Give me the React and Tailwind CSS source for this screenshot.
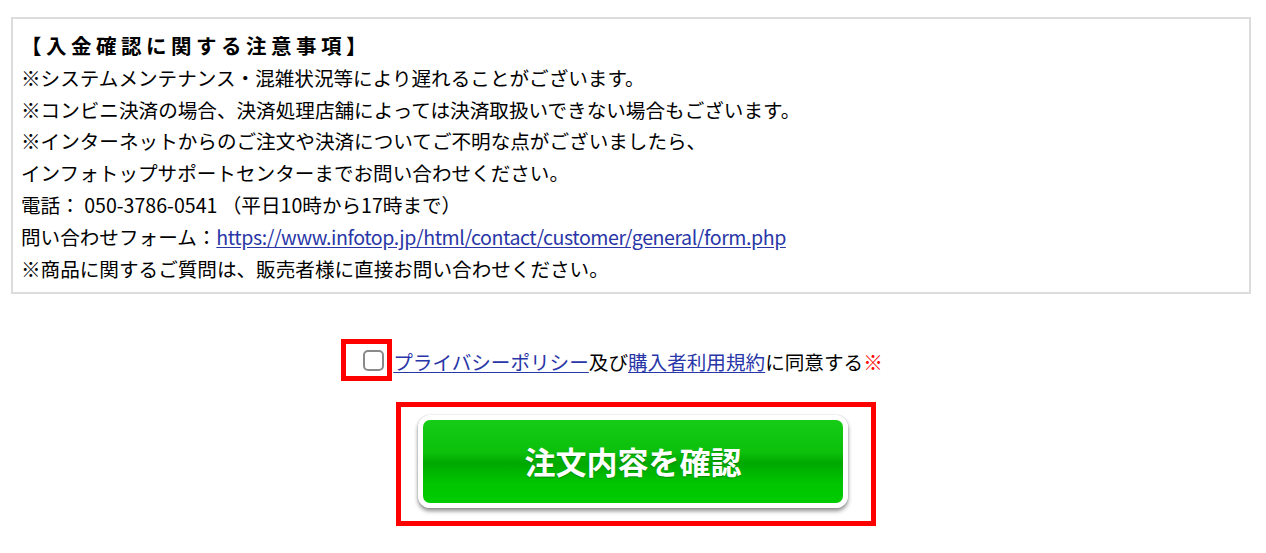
import { useState } from "react";

const font = { fontFamily: '"Noto Sans CJK JP", "Noto Sans", sans-serif' };

const App = () => {
  const [agreed, setAgreed] = useState(false);

  return (
    <div className="min-h-screen bg-white text-black pt-[17px]" style={font}>
      {/* 注意事項 */}
      <div className="ml-[11px] w-[1240px] border-2 border-[#dcdcdc] px-[8px] pt-[11px] pb-[8px] text-[19.6px] leading-[31.8px]">
        <p className="text-[20.5px] font-bold tracking-[4.5px]">【入金確認に関する注意事項】</p>
        <p>※システムメンテナンス・混雑状況等により遅れることがございます。</p>
        <p>※コンビニ決済の場合、決済処理店舗によっては決済取扱いできない場合もございます。</p>
        <p>※インターネットからのご注文や決済についてご不明な点がございましたら、</p>
        <p>インフォトップサポートセンターまでお問い合わせください。</p>
        <p>電話： 050-3786-0541 （平日10時から17時まで）</p>
        <p>
          問い合わせフォーム：
          <a
            href="#"
            className="tracking-[-0.45px] text-[#2936a8] underline underline-offset-2"
          >
            https://www.infotop.jp/html/contact/customer/general/form.php
          </a>
        </p>
        <p>※商品に関するご質問は、販売者様に直接お問い合わせください。</p>
      </div>

      {/* 同意チェック */}
      <div className="mt-[45px] flex justify-center pr-[42px]">
        <label className="flex items-center text-[19.6px]">
          <span className="flex h-[42px] w-[51px] items-center justify-center border-[5px] border-[#ff0000] pl-[14px]">
            <input
              type="checkbox"
              checked={agreed}
              onChange={(e) => setAgreed(e.target.checked)}
              className="h-[21px] w-[21px] appearance-none rounded-[5px] border-2 border-[#8a8a8a] bg-white checked:bg-[#2936a8]"
            />
          </span>
          <span className="flex items-center pt-[4px] leading-[38px]">
            <a href="#" className="ml-[1px] text-[#2936a8] underline underline-offset-2">
              プライバシーポリシー
            </a>
            <span>及び</span>
            <a href="#" className="text-[#2936a8] underline underline-offset-2">
              購入者利用規約
            </a>
            <span>に同意する</span>
            <span className="text-[#ff0000]">※</span>
          </span>
        </label>
      </div>

      {/* 確認ボタン */}
      <div className="mt-[21px] flex justify-center pl-[6px]">
        <div className="flex h-[124px] w-[480px] items-center justify-center border-[5px] border-[#ff0000] pr-[6px] pb-[6px]">
          <button
            type="button"
            className="flex h-[93px] w-[430px] items-center justify-center rounded-[12px] border-[5px] border-white bg-[linear-gradient(to_bottom,#16cc16_0%,#0bbf0b_40%,#00a800_52%,#00c400_75%,#00cc00_100%)] text-[31px] font-bold text-white shadow-[0_3px_4px_rgba(0,0,0,0.45),0_0_1px_rgba(0,0,0,0.4)] [text-shadow:0_1px_1px_rgba(0,0,0,0.25)]"
          >
            注文内容を確認
          </button>
        </div>
      </div>
    </div>
  );
};

export default App;
